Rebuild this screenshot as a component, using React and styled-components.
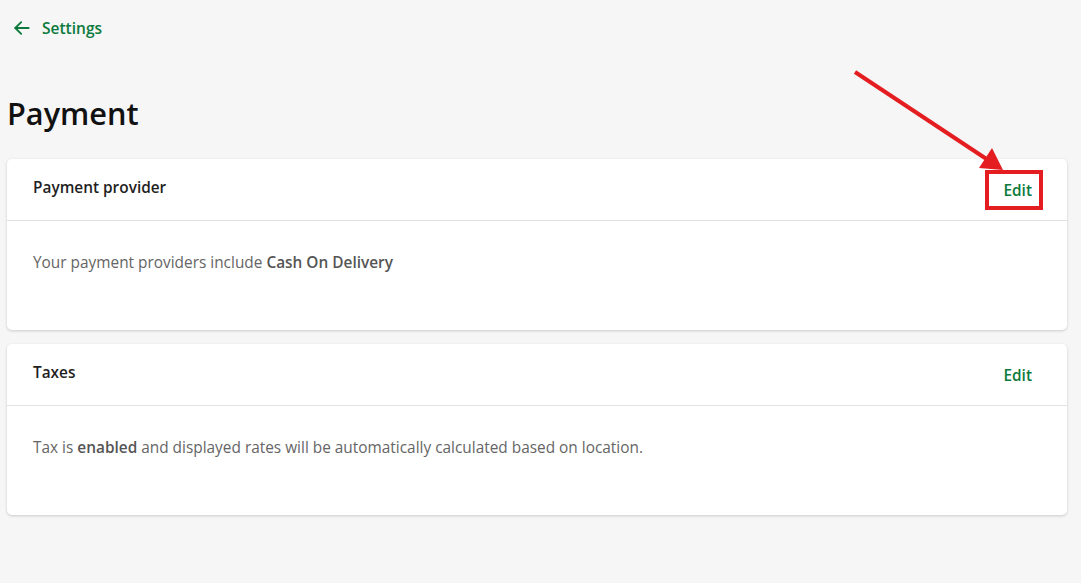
import styled, { createGlobalStyle } from "styled-components";

const GlobalStyle = createGlobalStyle`
  html, body {
    margin: 0;
    padding: 0;
    background: #f6f6f6;
    font-family: "Open Sans", "Noto Sans", sans-serif;
  }
`;

const Page = styled.div`
  position: relative;
  min-height: 583px;
  padding: 17px 14px 40px 7px;
  box-sizing: border-box;
`;

const BackLink = styled.a`
  display: inline-flex;
  align-items: center;
  gap: 10px;
  margin-left: 5px;
  color: #0b7a3c;
  font-size: 15.5px;
  font-weight: 600;
  text-decoration: none;
  cursor: pointer;

  svg {
    width: 20px;
    height: 20px;
  }
`;

const Title = styled.h1`
  margin: 50px 0 26px;
  font-size: 30.7px;
  font-weight: 600;
  color: #111;
  line-height: 40px;
`;

const Cards = styled.div`
  display: flex;
  flex-direction: column;
  gap: 14px;
`;

const Card = styled.section`
  background: #fff;
  border-radius: 5px;
  box-shadow: 0 1px 3px rgba(0, 0, 0, 0.18);
`;

const CardHeader = styled.div`
  display: flex;
  justify-content: space-between;
  align-items: flex-start;
  height: 62px;
  box-sizing: border-box;
  padding: 18px 35px 0 26px;
  border-bottom: 1px solid #e2e2e2;
`;

const CardTitle = styled.h2`
  margin: 0;
  font-size: 15.4px;
  font-weight: 600;
  color: #1f1f1f;
  line-height: 22px;
`;

const EditButton = styled.button`
  margin-top: 3px;
  padding: 0;
  border: none;
  background: none;
  color: #0b7a3c;
  font-family: inherit;
  font-size: 15.4px;
  font-weight: 600;
  line-height: 22px;
  cursor: pointer;
`;

const CardBody = styled.div`
  height: 109px;
  box-sizing: border-box;
  padding: 31px 26px 0;
  font-size: 15.4px;
  line-height: 22px;
  color: #656565;

  b {
    font-weight: 600;
    color: #555;
  }
`;

const Annotation = styled.svg`
  position: absolute;
  left: 0;
  top: 0;
  width: 1081px;
  height: 583px;
  pointer-events: none;
`;

const cards = [
  {
    id: "payment",
    title: "Payment provider",
    body: (
      <>
        Your payment providers include <b>Cash On Delivery</b>
      </>
    ),
  },
  {
    id: "taxes",
    title: "Taxes",
    body: (
      <>
        Tax is <b>enabled</b> and displayed rates will be automatically calculated based on location.
      </>
    ),
  },
];

const App = () => {
  return (
    <>
      <GlobalStyle />
      <Page>
        <BackLink>
          <svg viewBox="0 0 24 24" fill="none" stroke="currentColor" strokeWidth="2.2" strokeLinecap="round" strokeLinejoin="round">
            <path d="M20 12H4" />
            <path d="M11 5l-7 7 7 7" />
          </svg>
          Settings
        </BackLink>
        <Title>Payment</Title>
        <Cards>
          {cards.map((card) => (
            <Card key={card.id}>
              <CardHeader>
                <CardTitle>{card.title}</CardTitle>
                <EditButton>Edit</EditButton>
              </CardHeader>
              <CardBody>{card.body}</CardBody>
            </Card>
          ))}
        </Cards>
        <Annotation viewBox="0 0 1081 583">
          <line x1="855" y1="72" x2="988" y2="160" stroke="#e41d21" strokeWidth="4" />
          <polygon points="979,168 992,148 1003,170" fill="#e41d21" />
          <rect x="987" y="172" width="54" height="36" fill="none" stroke="#e41d21" strokeWidth="4" />
        </Annotation>
      </Page>
    </>
  );
};

export default App;
